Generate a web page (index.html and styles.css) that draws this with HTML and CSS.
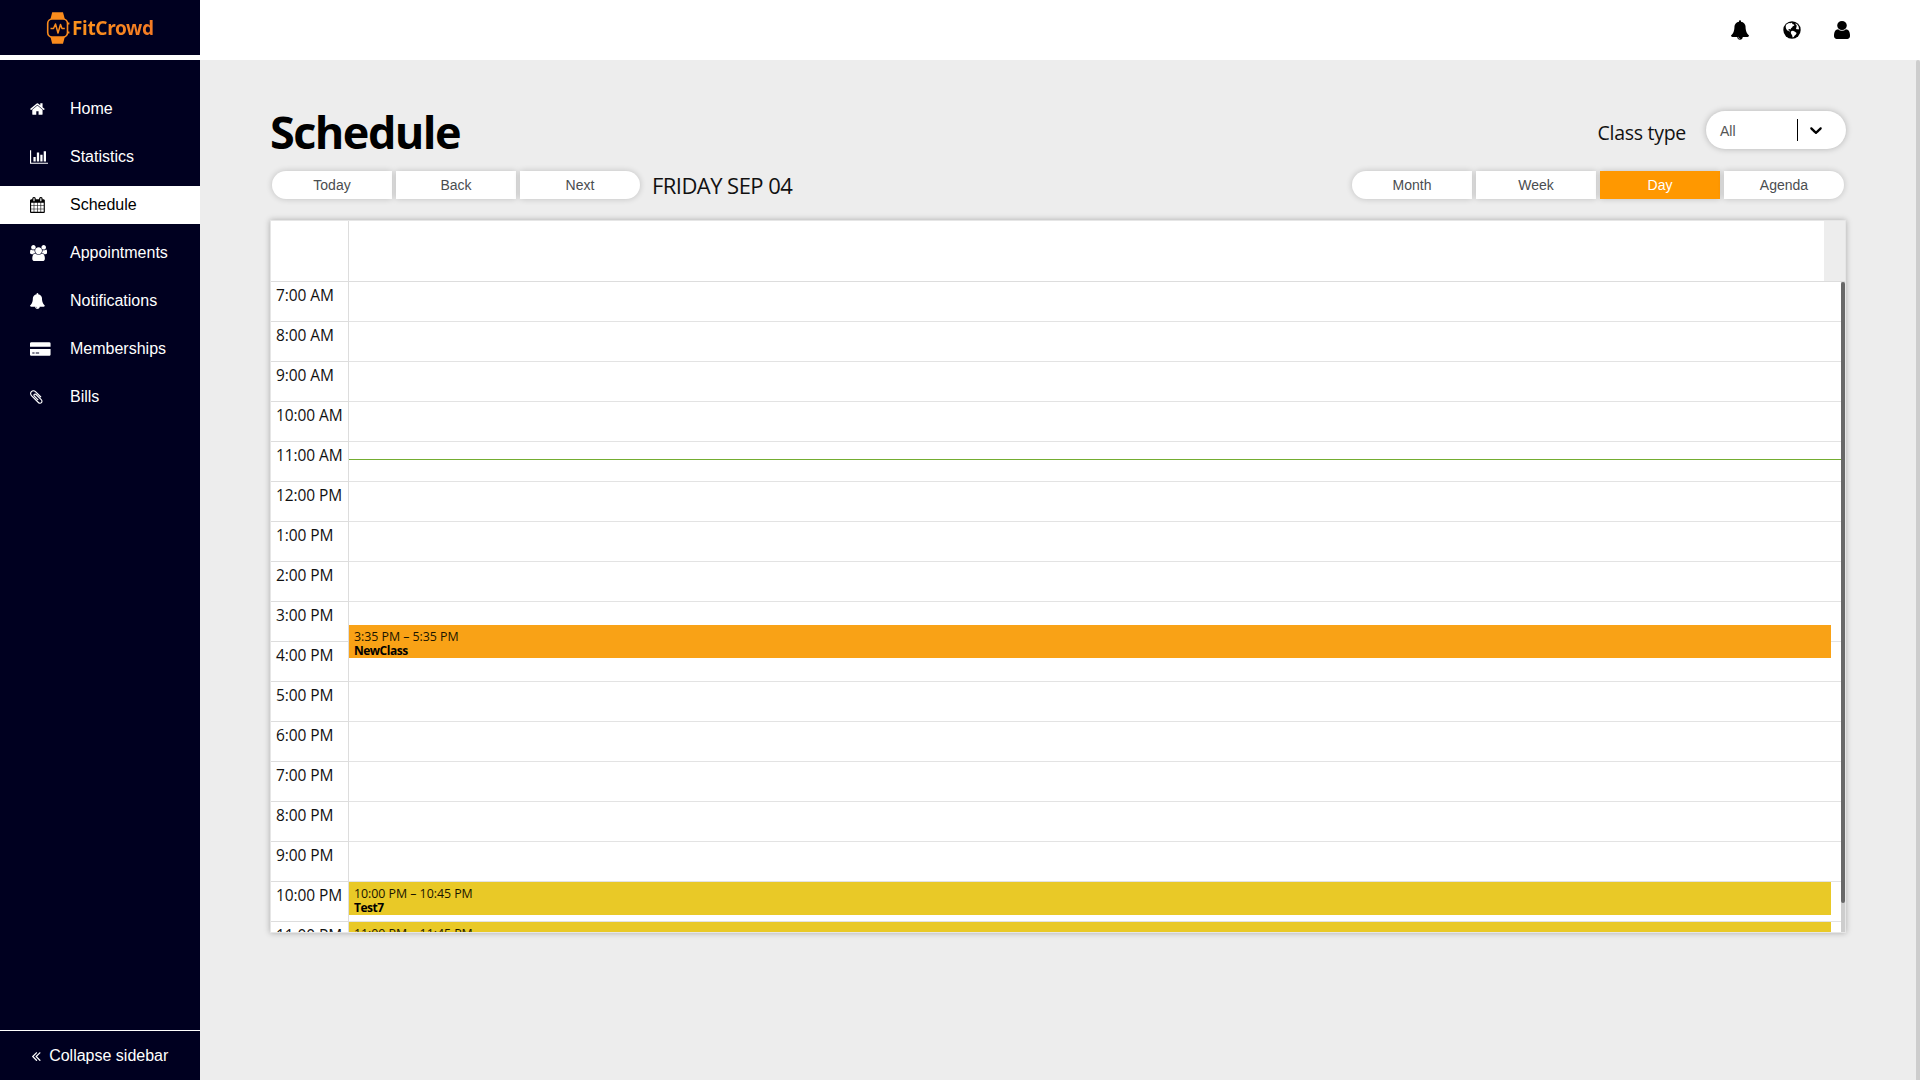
FILE: index.html
```html
<!DOCTYPE html>
<html lang="en">
<head>
<meta charset="utf-8">
<title>FitCrowd – Schedule</title>
<link rel="stylesheet" href="styles.css">
</head>
<body>
<div class="app">
  <aside class="sidebar">
    <div class="brand">
      <svg class="brand-mark" width="24" height="34" viewBox="0 0 24 34" fill="none">
        <path d="M4.500 8L6.200 1.200H17L18.800 8Z" fill="#f98b1d"/>
        <path d="M4.500 26L6.200 32.800H17L18.800 26Z" fill="#f98b1d"/>
        <rect x="1.700" y="8" width="19.800" height="18" rx="4.500" fill="#000020" stroke="#f98b1d" stroke-width="1.600"/>
        <path d="M22.700 11.500v2M22.700 20.500v2" stroke="#f98b1d" stroke-width="1.400"/>
        <path d="M4.500 17.500H7.500L9.500 13L12 22L14.500 13.500L16 17.500H18.800" stroke="#f98b1d" stroke-width="1.500" stroke-linejoin="round"/>
      </svg>
      <span class="brand-name">FitCrowd</span>
    </div>
    <nav class="nav">
      <a class="nav-item"><span class="nav-icon"><svg class="icon" viewBox="64 0 1664 1792"><path d="M1472 992v480q0 26-19 45t-45 19h-384v-384h-256v384h-384q-26 0-45-19t-19-45v-480q0-1 .5-3t.5-3l575-474 575 474q1 2 1 6zm223-69l-62 74q-8 9-21 11h-3q-13 0-21-7l-692-577-692 577q-12 8-24 7-13-2-21-11l-62-74q-8-10-7-23.500t11-21.500l719-599q32-26 76-26t76 26l244 204v-195q0-14 9-23t23-9h192q14 0 23 9t9 23v408l219 182q10 8 11 21.500t-7 23.500z"/></svg></span>Home</a>
      <a class="nav-item"><span class="nav-icon"><svg class="icon" viewBox="0 0 2048 1792"><path d="M640 896v512h-256v-512h256zm384-512v1024h-256v-1024h256zm1024 1152v128h-2048v-1536h128v1408h1920zm-640-896v768h-256v-768h256zm384-384v1152h-256v-1152h256z"/></svg></span>Statistics</a>
      <a class="nav-item active"><span class="nav-icon"><svg class="icon" viewBox="64 0 1664 1792"><path d="M192 1664h288v-288h-288v288zm352 0h320v-288h-320v288zm-352-352h288v-320h-288v320zm352 0h320v-320h-320v320zm-352-384h288v-288h-288v288zm736 736h320v-288h-320v288zm-384-736h320v-288h-320v288zm768 736h288v-288h-288v288zm-384-352h320v-320h-320v320zm-352-864v-288q0-13-9.500-22.500t-22.500-9.500h-64q-13 0-22.500 9.500t-9.500 22.500v288q0 13 9.500 22.500t22.500 9.500h64q13 0 22.500-9.500t9.500-22.500zm736 864h288v-320h-288v320zm-384-384h320v-288h-320v288zm384 0h288v-288h-288v288zm32-480v-288q0-13-9.500-22.500t-22.500-9.500h-64q-13 0-22.500 9.500t-9.500 22.500v288q0 13 9.500 22.500t22.500 9.500h64q13 0 22.500-9.500t9.500-22.500zm384-64v1280q0 52-38 90t-90 38h-1408q-52 0-90-38t-38-90v-1280q0-52 38-90t90-38h128v-96q0-66 47-113t113-47h64q66 0 113 47t47 113v96h384v-96q0-66 47-113t113-47h64q66 0 113 47t47 113v96h128q52 0 90 38t38 90z"/></svg></span>Schedule</a>
      <a class="nav-item"><span class="nav-icon"><svg class="icon" viewBox="64 0 1920 1792"><path d="M657 896q-162 5-265 128h-134q-82 0-138-40.500t-56-118.500q0-353 124-353 6 0 43.500 21t97.500 42.500 119 21.500q67 0 133-23-5 37-5 66 0 139 81 256zm1071 637q0 120-73 189.500t-194 69.500h-874q-121 0-194-69.500t-73-189.500q0-53 3.500-103.500t14-109 26.500-108.500 43-97.500 62-81 85.500-53.500 111.500-20q10 0 43 21.500t73 48 107 48 135 21.500 135-21.500 107-48 73-48 43-21.500q61 0 111.500 20t85.500 53.500 62 81 43 97.500 26.500 108.500 14 109 3.500 103.500zm-1024-1277q0 106-75 181t-181 75-181-75-75-181 75-181 181-75 181 75 75 181zm704 384q0 159-112.500 271.500t-271.500 112.500-271.500-112.500-112.500-271.500 112.500-271.500 271.500-112.500 271.500 112.500 112.500 271.500zm576 225q0 78-56 118.500t-138 40.500h-134q-103-123-265-128 81-117 81-256 0-29-5-66 66 23 133 23 59 0 119-21.500t97.500-42.500 43.500-21q124 0 124 353zm-128-609q0 106-75 181t-181 75-181-75-75-181 75-181 181-75 181 75 75 181z"/></svg></span>Appointments</a>
      <a class="nav-item"><span class="nav-icon"><svg class="icon" viewBox="64 0 1664 1792"><path d="M912 1696q0-16-16-16-59 0-101.500-42.500t-42.500-101.500q0-16-16-16t-16 16q0 73 51.500 124.500t124.500 51.500q16 0 16-16zm816-288q0 52-38 90t-90 38h-448q0 106-75 181t-181 75-181-75-75-181h-448q-52 0-90-38t-38-90q50-42 91-88t85-119.500 74.500-158.500 50-206 19.500-260q0-152 117-282.500t307-158.500q-8-19-8-39 0-40 28-68t68-28 68 28 28 68q0 20-8 39 190 28 307 158.500t117 282.500q0 139 19.500 260t50 206 74.500 158.500 85 119.500 91 88z"/></svg></span>Notifications</a>
      <a class="nav-item"><span class="nav-icon"><svg class="icon" viewBox="0 0 2304 1792"><path d="M0 1504v-608h2304v608q0 66-47 113t-113 47h-1984q-66 0-113-47t-47-113zm640-224v128h384v-128h-384zm-384 0v128h256v-128h-256zm1888-1152q66 0 113 47t47 113v352h-2304v-352q0-66 47-113t113-47h1984z"/></svg></span>Memberships</a>
      <a class="nav-item"><span class="nav-icon"><svg class="icon" viewBox="192 0 1408 1792"><path d="M1596 1385q0 117-79 196t-196 79q-135 0-235-100l-777-776q-113-115-113-271 0-159 110-270t269-111q158 0 273 113l605 606q10 10 10 22 0 16-30.500 46.500t-46.500 30.500q-13 0-23-10l-606-607q-79-77-181-77-106 0-179 75t-73 181q0 105 76 181l776 777q63 63 145 63 64 0 106-42t42-106q0-82-63-145l-581-581q-26-24-60-24-29 0-48 19t-19 48q0 32 25 59l410 410q10 10 10 22 0 16-31 47t-47 31q-12 0-22-10l-410-410q-63-61-63-149 0-82 57-139t139-57q88 0 149 63l581 581q100 98 100 235z"/></svg></span>Bills</a>
    </nav>
    <div class="collapse"><svg class="icon collapse-icon" viewBox="429 0 966 1792"><path d="M1011 1376q0 13-10 23l-50 50q-10 10-23 10t-23-10l-466-466q-10-10-10-23t10-23l466-466q10-10 23-10t23 10l50 50q10 10 10 23t-10 23l-393 393 393 393q10 10 10 23zm384 0q0 13-10 23l-50 50q-10 10-23 10t-23-10l-466-466q-10-10-10-23t10-23l466-466q10-10 23-10t23 10l50 50q10 10 10 23t-10 23l-393 393 393 393q10 10 10 23z"/></svg>Collapse sidebar</div>
  </aside>

  <div class="page">
    <header class="topbar">
      <svg class="top-icon top-bell" viewBox="64 0 1664 1792"><path d="M912 1696q0-16-16-16-59 0-101.500-42.500t-42.500-101.500q0-16-16-16t-16 16q0 73 51.500 124.500t124.500 51.500q16 0 16-16zm816-288q0 52-38 90t-90 38h-448q0 106-75 181t-181 75-181-75-75-181h-448q-52 0-90-38t-38-90q50-42 91-88t85-119.500 74.500-158.500 50-206 19.500-260q0-152 117-282.500t307-158.500q-8-19-8-39 0-40 28-68t68-28 68 28 28 68q0 20-8 39 190 28 307 158.500t117 282.500q0 139 19.500 260t50 206 74.500 158.500 85 119.500 91 88z"/></svg>
      <svg class="top-icon top-globe" viewBox="0 0 18 18"><circle cx="9" cy="9" r="8.700"/><path fill="#fff" d="M3.600 3.300L6 1.900L7.600 2.200L8.600 1.700L9.600 2.100L8.900 3.100L10.300 3.200L11.400 3.900L11 4.800L9.700 5.200L9.300 6.300L8 7.200L7.600 8.600L6.500 8.100L5.300 8.600L5.600 9.600L6.800 9.700L7.200 10.600L6 10.300L4.400 9.400L3.200 7.900L2.700 6.200L2.800 4.600ZM8.500 10L10 9.800L12 10.800L13.600 12L12.900 13.600L11.700 14.600L10.700 16L9.600 16.400L9.200 14.400L8 12.600L7.800 11ZM12.600 2.200L14.300 3.400L15.500 5.200L16 7.500L15.600 8.600L14.700 8.200L13.600 8.300L13 7.500L13.200 6.600L14 5.900L13.300 5.200L13.700 4.300L12.500 3.200Z"/></svg>
      <svg class="top-icon top-user" viewBox="256 128 1280 1536" preserveAspectRatio="none"><path d="M1536 1399q0 109-62.500 187t-150.500 78h-854q-88 0-150.500-78t-62.500-187q0-85 8.500-160.500t31.500-152 58.500-131 94-89 134.500-34.500q131 128 313 128t313-128q76 0 134.500 34.500t94 89 58.500 131 31.500 152 8.500 160.500zm-256-887q0 159-112.500 271.500t-271.500 112.500-271.500-112.500-112.500-271.500 112.500-271.500 271.500-112.500 271.500 112.500 112.500 271.500z"/></svg>
    </header>
    <div class="body">
      <main class="content">
        <div class="heading">
          <h1>Schedule</h1>
          <div class="filter">
            <span class="filter-label">Class type</span>
            <div class="select"><span class="select-value">All</span><span class="select-sep"></span><svg class="select-arrow" width="20" height="20" viewBox="0 0 20 20"><path d="M4.516 7.548c.436-.446 1.043-.481 1.576 0L10 11.295l3.908-3.747c.533-.481 1.141-.446 1.574 0 .436.445.408 1.197 0 1.615-.406.418-4.695 4.502-4.695 4.502-.217.223-.502.335-.787.335s-.57-.112-.789-.335c0 0-4.287-4.084-4.695-4.502s-.436-1.170 0-1.615z"/></svg></div>
          </div>
        </div>
        <div class="toolbar">
          <div class="group"><button>Today</button><button>Back</button><button>Next</button></div>
          <span class="date">FRIDAY SEP 04</span>
          <div class="group views"><button>Month</button><button>Week</button><button class="on">Day</button><button>Agenda</button></div>
        </div>
        <div class="calendar">
          <div class="cal-head"><div class="cal-corner"></div><div class="cal-allday"></div></div>
          <div class="cal-body">
            <div class="times">
              <div>7:00 AM</div><div>8:00 AM</div><div>9:00 AM</div><div>10:00 AM</div><div>11:00 AM</div><div>12:00 PM</div><div>1:00 PM</div><div>2:00 PM</div><div>3:00 PM</div><div>4:00 PM</div><div>5:00 PM</div><div>6:00 PM</div><div>7:00 PM</div><div>8:00 PM</div><div>9:00 PM</div><div>10:00 PM</div><div>11:00 PM</div>
            </div>
            <div class="day">
              <div class="now"></div>
              <div class="event orange" style="top:343px"><span>3:35 PM – 5:35 PM</span><b>NewClass</b></div>
              <div class="event yellow" style="top:600px"><span>10:00 PM – 10:45 PM</span><b>Test7</b></div>
              <div class="event yellow" style="top:640px"><span>11:00 PM – 11:45 PM</span><b>Test7</b></div>
            </div>
            <div class="track"><div class="thumb"></div></div>
          </div>
        </div>
      </main>
      <div class="page-track"></div>
    </div>
  </div>
</div>
</body>
</html>
```
FILE: styles.css
```css
* { box-sizing: border-box; }
body { margin: 0; background: #ededed; color: #000; font-family: "Open Sans", "Noto Sans", sans-serif; }
.app { display: flex; height: 1080px; overflow: hidden; }

.sidebar { width: 200px; display: flex; flex-direction: column; background: #000020; color: #fff; font: 16px "Liberation Sans", Arial, sans-serif; }
.brand { height: 60px; border-bottom: 5px solid #fff; display: flex; align-items: center; padding-left: 46px; }
.brand-mark { flex: none; }
.brand-name { margin-left: 2px; padding-top: 1px; font: 700 19px/24px "Noto Sans", sans-serif; letter-spacing: -.35px; background: linear-gradient(90deg, #fb921c, #f47a24); -webkit-background-clip: text; background-clip: text; color: transparent; }
.nav { flex: 1; padding-top: 30px; display: flex; flex-direction: column; gap: 10px; }
.nav-item { height: 38px; padding-left: 30px; display: flex; align-items: center; }
.nav-icon { width: 40px; height: 16px; display: flex; }
.icon { height: 16px; fill: currentColor; }
.active { background: #fff; color: #000; }
.collapse { height: 50px; border-top: 1px solid #fff; display: flex; align-items: center; padding-left: 32px; }
.collapse-icon { margin-right: 8.500px; }

.page { flex: 1; display: flex; flex-direction: column; }
.topbar { height: 60px; background: #fff; display: flex; justify-content: flex-end; align-items: center; padding-right: 70px; }
.top-bell { width: 18px; height: 20px; margin-right: 34px; }
.top-globe { width: 18px; height: 18px; margin-right: 33px; }
.top-user { width: 16px; height: 18px; }
.body { flex: 1; display: flex; }
.page-track { width: 4px; background: #cdcdcd; border-radius: 2px 2px 0 0; }

.content { flex: 1; padding: 43px 70px 0; }
.heading { height: 60px; display: flex; align-items: center; justify-content: space-between; }
h1 { margin: 0 0 2px; font-size: 45px; font-weight: 700; line-height: 58px; letter-spacing: -1.550px; }
.filter { display: flex; align-items: center; gap: 20px; margin-bottom: 6px; }
.filter-label { font-size: 19.500px; line-height: 28px; letter-spacing: -.28px; padding-top: 5px; color: #111; }
.select { width: 140px; height: 38px; border-radius: 19px; background: #fff; box-shadow: 0 0 6px rgba(0,0,0,.25); display: flex; align-items: center; padding-left: 14px; font: 14px "Liberation Sans", Arial, sans-serif; color: #555; }
.select-value { flex: 1; padding-top: 2px; }
.select-sep { width: 1px; height: 22px; background: #000; margin-right: 8px; }
.select-arrow { margin-right: 20px; fill: #000; }

.toolbar { height: 28px; margin-top: 8px; padding: 0 2px; display: flex; align-items: center; }
.group { display: flex; gap: 4px; }
button { width: 120px; height: 28px; padding: 0; border: 0; background: #fff; color: #4a4d50; font: 14px "Liberation Sans", Arial, sans-serif; box-shadow: 0 0 6px rgba(0,0,0,.2); }
button:first-child { border-radius: 14px 0 0 14px; }
button:last-child { border-radius: 0 14px 14px 0; }
.on { background: #ff9800; color: #fff; }
.views { margin-left: auto; }
.date { margin-left: 12px; font-size: 22px; line-height: 28px; letter-spacing: -.55px; color: #111; }

.calendar { height: 713px; margin-top: 21px; border: 1px solid #e6e6e6; box-shadow: 0 0 6px rgba(0,0,0,.28); display: flex; flex-direction: column; }
.cal-head { height: 61px; display: flex; padding-right: 21px; border-bottom: 1px solid #ddd; }
.cal-corner { width: 78px; background: #fff; border-right: 1px solid #ddd; }
.cal-allday { flex: 1; background: #fff; }
.cal-body { height: 650px; display: flex; overflow: hidden; background: #fff; }
.times { width: 78px; flex: none; border-right: 1px solid #ddd; font-size: 15.500px; line-height: 26px; letter-spacing: -.1px; color: #111; }
.times div { height: 40px; padding-left: 5px; border-bottom: 1px solid #ddd; white-space: nowrap; }
.day { flex: 1; position: relative; background: repeating-linear-gradient(#fff 0 39px, #e3e3e3 39px 40px); }
.now { position: absolute; left: 0; right: 0; top: 177px; height: 1px; background: #74ad31; }
.event { position: absolute; left: 0; right: 10px; height: 33px; padding: 5px 5px 0; overflow: hidden; display: flex; flex-direction: column; font-size: 12.400px; line-height: 14px; letter-spacing: -.04px; color: #1a1500; }
.event b { font-size: 12px; letter-spacing: -.5px; color: #000; }
.orange { background: #f9a216; }
.yellow { background: #e9c927; }
.track { width: 4px; background: #cdcdcd; }
.thumb { height: 621px; background: #686868; border-radius: 2px; }
```
